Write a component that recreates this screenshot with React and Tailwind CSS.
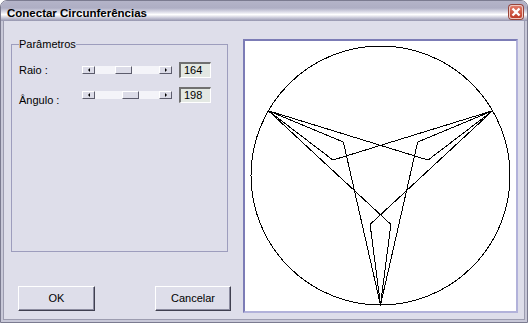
import React from "react";

const cx = 380.5;
const cy = 175.5;
const R = 129.5;
const r = 50;

const pt = (deg, rad) => {
  const a = (deg * Math.PI) / 180;
  return [cx + rad * Math.cos(a), cy + rad * Math.sin(a)];
};

// three vertices on the circle, each sends two bent paths to the others
const paths = [];
[90, 210, 330].forEach((a) => {
  paths.push([pt(a, R), pt(a + 12, r), pt(a + 240, R)]);
  paths.push([pt(a, R), pt(a - 12, r), pt(a + 120, R)]);
});

const Arrow = ({ dir }) => (
  <div className="w-[13px] h-[8px] bg-[#dcdce8] border-t border-l border-t-white border-l-white border-b border-r border-b-[#5c5c6c] border-r-[#5c5c6c] flex items-center justify-center">
    {dir === "left" ? (
      <div className="w-0 h-0 border-y-[2px] border-y-transparent border-r-[2px] border-r-black" />
    ) : (
      <div className="w-0 h-0 border-y-[2px] border-y-transparent border-l-[2px] border-l-black" />
    )}
  </div>
);

const ScrollBar = ({ thumb }) => (
  <div className="flex w-[90px] h-[8px] bg-[#f4f4f9]">
    <Arrow dir="left" />
    <div className="flex-1 flex">
      <div
        className={`w-[17px] h-full bg-[#dcdce8] border-t border-l border-t-white border-l-white border-b border-r border-b-[#5c5c6c] border-r-[#5c5c6c] ${thumb}`}
      />
    </div>
    <Arrow dir="right" />
  </div>
);

const Edit = ({ value }) => (
  <div className="ml-[7px] w-[32px] h-[16px] bg-[#e3e8e3] border-t-2 border-l-2 border-t-[#707070] border-l-[#707070] border-b border-r border-b-white border-r-white pl-[3px] text-[11px] leading-[13px] text-black">
    {value}
  </div>
);

const Button = ({ children, className }) => (
  <div
    className={`h-[25px] flex items-center justify-center bg-[#dedeea] border-t border-l border-t-white border-l-white border-b border-r border-b-[#404050] border-r-[#404050] shadow-[inset_-1px_-1px_0_#8c8ca0] text-[11px] text-black ${className}`}
  >
    {children}
  </div>
);

export default function App() {
  return (
    <div className="w-[528px] h-[323px] flex flex-col border border-[#7b7b90] rounded-t-[7px] overflow-hidden font-['Liberation_Sans',Arial,sans-serif] bg-[#dedeea]">
      {/* title bar */}
      <div className="h-[20px] shrink-0 flex items-center justify-between pt-[4px] pl-[6px] pr-[4px] bg-[linear-gradient(to_bottom,#b4b4c8_0%,#aeaec4_35%,#dcdce8_55%,#ffffff_68%,#d0d0de_82%,#9494ae_100%)]">
        <span className="text-[11.5px] leading-[14px] font-bold text-black">Conectar Circunferências</span>
        <div className="self-start w-[14px] h-[14px] rounded-[3px] border border-[#f0c8c0] bg-[linear-gradient(to_bottom,#e07a68,#c03c28)] flex items-center justify-center shadow-[0_0_0_1px_#98443a]">
          <svg width="10" height="10" viewBox="0 0 10 10">
            <path d="M1.5 1.5 L8.5 8.5 M8.5 1.5 L1.5 8.5" stroke="white" strokeWidth="2.4" />
          </svg>
        </div>
      </div>

      <div className="flex-1 flex border-x-2 border-b-2 border-[#c8c8d8]">
        <div className="flex-1 flex border-x border-b border-[#9c9cb0] bg-[#dedeea] text-black">
          {/* left column */}
          <div className="w-[239px] shrink-0 flex flex-col pt-[17px] pl-[7px]">
            <fieldset className="w-[217px] h-[214px] border border-[#9d9dbd] px-[7px]">
              <legend className="text-[11px] leading-[13px]">Parâmetros</legend>
              <div className="mt-[11px] h-[16px] flex items-center">
                <span className="w-[63px] text-[11px] leading-[13px] mt-[1px]">Raio :</span>
                <ScrollBar thumb="ml-[20px]" />
                <Edit value="164" />
              </div>
              <div className="mt-[9px] h-[16px] flex items-center">
                <span className="w-[63px] text-[11px] leading-[13px] mt-[11px]">Ângulo :</span>
                <ScrollBar thumb="ml-[27px]" />
                <Edit value="198" />
              </div>
            </fieldset>
            <div className="mt-[34px] flex pl-[7px]">
              <Button className="w-[77px]">OK</Button>
              <Button className="w-[76px] ml-[60px]">Cancelar</Button>
            </div>
          </div>

          {/* drawing */}
          <div className="mt-[18px] w-[275px] h-[274px] bg-white border-2 border-t-[#7c7cb6] border-l-[#7c7cb6] border-b-[#b2b2da] border-r-[#b2b2da]">
            <svg className="block" width="271" height="270" viewBox="245 41 271 270" shapeRendering="crispEdges">
              <circle cx={cx} cy={cy} r={R} fill="none" stroke="black" strokeWidth="1" />
              {paths.map((p, i) => (
                <polyline
                  key={i}
                  points={p.map(([x, y]) => `${x},${y}`).join(" ")}
                  fill="none"
                  stroke="black"
                  strokeWidth="1"
                />
              ))}
            </svg>
          </div>
        </div>
      </div>
    </div>
  );
}
